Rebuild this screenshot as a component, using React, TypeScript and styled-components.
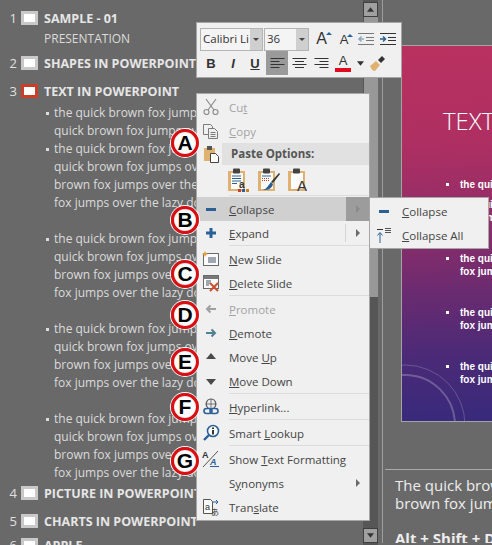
import React from 'react';
import styled, { createGlobalStyle } from 'styled-components';

const GlobalStyle = createGlobalStyle`
  html, body {
    margin: 0;
    padding: 0;
    background: #696969;
  }
`;

const UI_FONT = `"Open Sans", "Noto Sans", sans-serif`;

const Page = styled.div`
  position: relative;
  display: flex;
  width: 492px;
  height: 545px;
  overflow: hidden;
  background: #696969;
  font-family: ${UI_FONT};
`;

const Outline = styled.div`
  width: 363px;
  flex: none;
  padding-top: 8px;
  overflow: hidden;
  color: #e4e4e4;
`;

const TitleRow = styled.div<{ $gap: number }>`
  display: flex;
  align-items: center;
  height: 20px;
  margin-top: ${(p) => p.$gap}px;
  white-space: nowrap;
`;

const Num = styled.span`
  width: 18px;
  padding-right: 1px;
  box-sizing: border-box;
  text-align: right;
  font-size: 13px;
  color: #e0e0e0;
`;

const Thumb = styled.span<{ $active?: boolean }>`
  width: 11px;
  height: 8px;
  flex: none;
  margin: 0 6px 0 3px;
  background: #fff;
  border-style: solid;
  border-color: ${(p) => (p.$active ? '#c8402a' : '#c9c9c9')};
  border-width: 3px;
`;

const Title = styled.span`
  font-size: 12.5px;
  font-weight: 700;
  color: #e6e6e6;
`;

const SubTitle = styled.div`
  height: 18px;
  margin: 2px 0 5px 44px;
  line-height: 18px;
  font-size: 12px;
  color: #dcdcdc;
`;

const Body = styled.div`
  margin: 3px 0 1px 44px;
`;

const Bullet = styled.div<{ $after: number }>`
  position: relative;
  padding-left: 10px;
  margin-bottom: ${(p) => p.$after}px;
  &::before {
    content: '';
    position: absolute;
    left: 2px;
    top: 8px;
    width: 3px;
    height: 3px;
    background: #dcdcdc;
  }
`;

const BodyLine = styled.div`
  height: 18px;
  line-height: 18px;
  font-size: 12px;
  white-space: nowrap;
  color: #dcdcdc;
`;

const Scrollbar = styled.div`
  width: 15px;
  flex: none;
  display: flex;
  flex-direction: column;
  align-items: center;
  padding: 2px 0;
  box-sizing: border-box;
  background: #565656;
`;

const ScrollButton = styled.div`
  width: 15px;
  height: 15px;
  flex: none;
  box-sizing: border-box;
  display: flex;
  align-items: center;
  justify-content: center;
  background: #a0a0a0;
  border: 1px solid #3f3f3f;
`;

const ScrollThumb = styled.div`
  width: 14px;
  height: 280px;
  flex: none;
  background: #989898;
`;

const ScrollTrack = styled.div`
  flex: 1;
`;

const Side = styled.div`
  flex: 1;
  min-width: 0;
  margin-left: 4px;
  border-left: 1px solid #9d9d9d;
  overflow: hidden;
  height: 543px;
`;

const Slide = styled.div`
  position: relative;
  width: 200px;
  height: 375px;
  margin: 45px 0 0 18px;
  overflow: hidden;
  border: 1px solid #a4a4a4;
  box-sizing: content-box;
  background: linear-gradient(178deg, #b9315f 0%, #ae2f62 26%, #8f2d69 47%, #6a2b70 65%, #4a2a77 82%, #372a7b 100%);
`;

const SlideTitle = styled.div`
  padding: 58px 0 0 41px;
  height: 34px;
  line-height: 34px;
  font-size: 24px;
  font-weight: 300;
  color: #fff;
  white-space: nowrap;
`;

const SlideBullets = styled.div`
  padding: 40px 0 0 44px;
`;

const SlideBullet = styled.div<{ $gap: number }>`
  position: relative;
  padding-left: 14px;
  margin-top: ${(p) => p.$gap}px;
  font-family: 'Liberation Sans', Arial, sans-serif;
  font-size: 10px;
  font-weight: 700;
  line-height: 13px;
  color: #fff;
  white-space: nowrap;
  &::before {
    content: '';
    position: absolute;
    left: 0;
    top: 5px;
    width: 3px;
    height: 3px;
    background: #fff;
  }
`;

const SlideArt = styled.svg`
  position: absolute;
  left: 0;
  bottom: 0;
`;

const Notes = styled.div`
  margin: 47px 0 0 2px;
  border-top: 1px solid #a9a9a9;
  padding: 6px 0 0 10px;
  color: #eeeeee;
  font-size: 15px;
  line-height: 18px;
  white-space: nowrap;
`;

const NotesBold = styled.div`
  margin-top: 17px;
  font-weight: 700;
`;

const MiniBar = styled.div`
  position: absolute;
  left: 196px;
  top: 22px;
  width: 206px;
  height: 56px;
  box-sizing: border-box;
  padding: 4px 0 0 3px;
  background: #f0f0f0;
  border: 1px solid #a6a6a6;
  display: flex;
  flex-direction: column;
`;

const BarRow = styled.div`
  display: flex;
  align-items: center;
  height: 24px;
`;

const Combo = styled.div<{ $w: number }>`
  width: ${(p) => p.$w}px;
  height: 23px;
  box-sizing: border-box;
  display: flex;
  border: 1px solid #b4b4b4;
  margin-right: 1px;
  background: #f4f4f4;
`;

const ComboText = styled.span`
  flex: 1;
  min-width: 0;
  overflow: hidden;
  padding-left: 2px;
  font-size: 11.5px;
  line-height: 20px;
  white-space: nowrap;
  color: #333;
`;

const ComboArrow = styled.span`
  width: 12px;
  flex: none;
  background: #cfcfcf;
  display: flex;
  align-items: center;
  justify-content: center;
  &::after {
    content: '';
    border-left: 3px solid transparent;
    border-right: 3px solid transparent;
    border-top: 3px solid #444;
  }
`;

const BarBtn = styled.span<{ $w?: number; $on?: boolean }>`
  width: ${(p) => p.$w ?? 22}px;
  height: 24px;
  flex: none;
  display: flex;
  align-items: center;
  justify-content: center;
  background: ${(p) => (p.$on ? '#9a9a9a' : 'transparent')};
`;

const FmtLetter = styled.span<{ $italic?: boolean; $under?: boolean }>`
  font-family: 'Liberation Sans', Arial, sans-serif;
  font-size: 13px;
  font-weight: 700;
  color: #333;
  font-style: ${(p) => (p.$italic ? 'italic' : 'normal')};
  text-decoration: ${(p) => (p.$under ? 'underline' : 'none')};
`;

const GrowIcon = styled.span<{ $size: number }>`
  position: relative;
  font-family: 'Liberation Sans', Arial, sans-serif;
  font-size: ${(p) => p.$size}px;
  color: #333;
  &::after {
    content: '';
    position: absolute;
    right: -5px;
    top: 2px;
    border-left: 3px solid transparent;
    border-right: 3px solid transparent;
    border-bottom: 3px solid #2b6096;
  }
`;

const ColorA = styled.span`
  display: inline-block;
  width: 16px;
  text-align: center;
  font-family: 'Liberation Sans', Arial, sans-serif;
  font-size: 13px;
  line-height: 14px;
  color: #333;
  border-bottom: 4px solid #e00b1c;
`;

const Menu = styled.div`
  position: absolute;
  left: 196px;
  top: 93px;
  width: 174px;
  height: 428px;
  box-sizing: border-box;
  background: #f0f0f0;
  border: 1px solid #a6a6a6;
  padding-top: 1px;
  color: #444;
  font-size: 11.5px;
`;

const Item = styled.div<{ $hot?: boolean; $off?: boolean }>`
  display: flex;
  align-items: center;
  height: 24px;
  background: ${(p) => (p.$hot ? '#d0d0d0' : 'transparent')};
  color: ${(p) => (p.$off ? '#a3a3a3' : '#444')};
  white-space: nowrap;
`;

const ItemIcon = styled.span`
  width: 32px;
  flex: none;
  display: flex;
  align-items: center;
  justify-content: center;
  padding-right: 4px;
  box-sizing: border-box;
`;

const ItemLabel = styled.span`
  flex: 1;
`;

const Key = styled.span`
  text-decoration: underline;
`;

const Arrow = styled.span<{ $hot?: boolean }>`
  width: 23px;
  height: 100%;
  flex: none;
  box-sizing: border-box;
  display: flex;
  align-items: center;
  justify-content: center;
  background: ${(p) => (p.$hot ? '#9c9c9c' : 'transparent')};
  &::before {
    content: '';
    border-top: 4px solid transparent;
    border-bottom: 4px solid transparent;
    border-left: 4px solid ${(p) => (p.$hot ? '#8a8a8a' : '#6a6a6a')};
  }
`;

const ArrowEdge = styled.span`
  width: 1px;
  height: 18px;
  flex: none;
  background: #d5d5d5;
`;

const Sep = styled.div`
  height: 1px;
  margin: 0 0 1px 32px;
  background: #dcdcdc;
`;

const PasteHead = styled.div`
  display: flex;
  align-items: center;
  height: 22px;
`;

const PasteBar = styled.div`
  flex: 1;
  height: 22px;
  margin-left: -7px;
  padding-left: 9px;
  line-height: 22px;
  background: #e1e1e1;
  font-weight: 700;
  color: #555;
`;

const PasteIcons = styled.div`
  display: flex;
  gap: 8px;
  height: 30px;
  padding-left: 31px;
  align-items: center;
`;

const SubMenu = styled.div`
  position: absolute;
  left: 369px;
  top: 197px;
  width: 120px;
  height: 52px;
  box-sizing: border-box;
  padding: 1px 0;
  background: #f0f0f0;
  border: 1px solid #a6a6a6;
  font-size: 11.5px;
  color: #444;
`;

const Callout = styled.div<{ $y: number }>`
  position: absolute;
  left: 171px;
  top: ${(p) => p.$y - 14}px;
  width: 28px;
  height: 28px;
  box-sizing: border-box;
  border-radius: 50%;
  display: flex;
  align-items: center;
  justify-content: center;
  background: radial-gradient(circle at 50% 50%, #ffffff 62%, #f3b9b9 82%);
  border: 3px solid #d90f14;
  box-shadow: 0 0 0 1px #fff;
  font-family: 'Liberation Sans', Arial, sans-serif;
  font-weight: 700;
  font-size: 21px;
  color: #000;
`;

const Ink = '#44546a';
const Blue = '#2b6096';
const Tan = '#e0b272';

const IconSvg: React.FC<{ size?: number; children: React.ReactNode }> = ({ size = 18, children }) => (
  <svg width={size} height={size} viewBox="0 0 18 18" fill="none">
    {children}
  </svg>
);

const Scissors = () => (
  <IconSvg>
    <g stroke="#8d8d8d" strokeWidth="1.2">
      <path d="M4 1l8 11M14 1L6 12" />
      <circle cx="4.500" cy="14" r="2.500" />
      <circle cx="13.500" cy="14" r="2.500" />
    </g>
  </IconSvg>
);

const CopyIcon = () => (
  <IconSvg>
    <g stroke="#7b7b7b" fill="#f0f0f0">
      <path d="M1.500 2.500h7l2 2v8h-9z" />
      <path d="M6.500 6.500h6l3 3v7h-9z" />
    </g>
    <path d="M8.500 10.500h5M8.500 12.500h5M8.500 14.500h5" stroke="#7b7b7b" />
  </IconSvg>
);

const PasteIcon = () => (
  <IconSvg>
    <rect x="2" y="3" width="11" height="13" fill={Tan} />
    <rect x="5" y="1" width="5" height="4" fill="#555" />
    <path d="M8.500 8.500h5l3 3v6h-8z" fill="#fff" stroke="#444" />
  </IconSvg>
);

const Clip: React.FC<{ children: React.ReactNode }> = ({ children }) => (
  <svg width="22" height="24" viewBox="0 0 22 24" fill="none">
    <rect x="0" y="3" width="17" height="20" fill={Tan} />
    <rect x="3" y="5" width="12" height="16" fill="#fff" />
    <rect x="5" y="0.500" width="7" height="5" rx="1" fill="#444" />
    {children}
  </svg>
);

const PasteKeep = () => (
  <Clip>
    <path d="M4 8h9M4 10.500h9M4 13h9M4 15.500h5" stroke={Blue} />
    <text x="11" y="20" fontSize="10" fontWeight="700" fontFamily="Liberation Sans" fill="#333">a</text>
    <rect x="10" y="21" width="3" height="3" fill="#c8402a" />
    <rect x="14" y="21" width="3" height="3" fill="#2b6096" />
    <rect x="18" y="21" width="3" height="3" fill="#c9812b" />
  </Clip>
);

const PastePicture = () => (
  <Clip>
    <path d="M4 8h9" stroke={Blue} />
    <path d="M4 10.500h8M4 12.500h8" stroke="#c8402a" strokeDasharray="1 1" />
    <path d="M21 5l1 1-7 9-2-1z" fill="#333" />
    <path d="M13 14l2 2c-1 5-5 6-10 6 3-1 5-4 8-8z" fill={Blue} />
  </Clip>
);

const PasteText = () => (
  <Clip>
    <text x="9" y="23" fontSize="15" fontFamily="Liberation Sans" fill="#333">A</text>
  </Clip>
);

const Minus = () => (
  <IconSvg>
    <rect x="4" y="8" width="10" height="3" fill={Blue} />
  </IconSvg>
);

const Plus = () => (
  <IconSvg>
    <path d="M7.500 4h3v3.500H14v3h-3.500V14h-3v-3.500H4v-3h3.500z" fill={Blue} />
  </IconSvg>
);

const CollapseAll = () => (
  <IconSvg>
    <path d="M2 3.500h6" stroke="#333" />
    <path d="M10 2.500h6M10 4.500h6M10 6.500h6" stroke="#555" />
    <path d="M5 17V7M2.500 9.500L5 6.500l2.500 3" stroke={Blue} />
  </IconSvg>
);

const NewSlide = () => (
  <IconSvg>
    <rect x="1.500" y="3.500" width="15" height="12" fill="#fafafa" stroke="#6b6b6b" />
    <path d="M6 8h8M6 10h8M6 12h8" stroke={Ink} />
    <path d="M3 1l1 2 2 1-2 1-1 2-1-2-2-1 2-1z" fill="#e8a13f" />
  </IconSvg>
);

const DeleteSlide = () => (
  <IconSvg>
    <rect x="1.500" y="1.500" width="15" height="13" fill="#fafafa" stroke="#6b6b6b" />
    <rect x="2" y="2" width="14" height="3" fill="#777" />
    <path d="M4 7h5M4 9h4M4 11h3" stroke={Ink} />
    <path d="M8 9l8 8M16 9l-8 8" stroke="#c8502f" strokeWidth="2" />
  </IconSvg>
);

const ArrowLeft = () => (
  <IconSvg>
    <path d="M14 9H5M8.500 5.500L5 9l3.500 3.500" stroke="#a0a0a0" strokeWidth="2" />
  </IconSvg>
);

const ArrowRight = () => (
  <IconSvg>
    <path d="M4 9h9M9.500 5.500L13 9l-3.500 3.500" stroke="#4f8191" strokeWidth="2" />
  </IconSvg>
);

const Up = () => (
  <IconSvg>
    <path d="M9 5l5 6H4z" fill="#4a4a4a" />
  </IconSvg>
);

const Down = () => (
  <IconSvg>
    <path d="M4 7h10l-5 6z" fill="#4a4a4a" />
  </IconSvg>
);

const LinkIcon = () => (
  <IconSvg>
    <circle cx="9" cy="6" r="5" stroke="#555" fill="#f0f0f0" />
    <path d="M4 6h10M9 1v10M6 1.500c-2 3-2 6 0 9M12 1.500c2 3 2 6 0 9" stroke="#555" strokeWidth=".8" />
    <rect x="2" y="10.500" width="8" height="5" rx="2.500" stroke={Blue} strokeWidth="1.600" />
    <rect x="8" y="10.500" width="8" height="5" rx="2.500" stroke={Blue} strokeWidth="1.600" />
  </IconSvg>
);

const LookupIcon = () => (
  <IconSvg>
    <circle cx="11" cy="7" r="5.500" stroke={Blue} strokeWidth="1.600" fill="#fff" />
    <path d="M7 11l-5 5" stroke={Blue} strokeWidth="2.400" />
    <rect x="10" y="6" width="2" height="4.500" fill="#333" />
    <rect x="10" y="3.500" width="2" height="1.500" fill="#333" />
  </IconSvg>
);

const FormatIcon = () => (
  <IconSvg>
    <text x="0" y="8" fontSize="9" fontWeight="700" fontFamily="Liberation Sans" fill="#333">A</text>
    <path d="M16 1L1 17" stroke="#555" />
    <text x="8" y="15" fontSize="9" fontWeight="700" fontStyle="italic" fontFamily="Liberation Sans" fill={Blue}>A</text>
    <path d="M8 16.500h9" stroke={Blue} />
  </IconSvg>
);

const TranslateIcon = () => (
  <IconSvg>
    <path d="M1.500 1.500h7l2 2v12h-9z" fill="#fafafa" stroke="#555" />
    <text x="3" y="12" fontSize="9" fontFamily="Liberation Sans" fill="#333">a</text>
    <path d="M11 4h5M14 2l2 2-2 2" stroke={Blue} />
    <text x="9" y="17" fontSize="8" fontFamily="Noto Sans CJK SC" fill="#333">あ</text>
  </IconSvg>
);

const Indent: React.FC<{ more?: boolean }> = ({ more }) => (
  <svg width="18" height="14" viewBox="0 0 18 14" fill="none">
    <path d="M1 1.500h16M9 5.500h8M9 8.500h8M1 12.500h16" stroke={more ? '#333' : '#777'} />
    {more ? (
      <path d="M1 7h5M4 4.500L6.500 7 4 9.500" stroke={Blue} strokeWidth="1.500" />
    ) : (
      <path d="M7 7H2M4.500 4.500L2 7l2.500 2.500" stroke="#8fa6bd" strokeWidth="1.500" />
    )}
  </svg>
);

const ALIGN_SHORT = {
  left: 'M.5 4.500h9M.5 10.500h9',
  center: 'M3 4.500h9M3 10.500h9',
  right: 'M5.500 4.500h9M5.500 10.500h9',
};

const Align: React.FC<{ kind: 'left' | 'center' | 'right' }> = ({ kind }) => (
  <svg width="15" height="12" viewBox="0 0 15 12" fill="none">
    <path d="M.5 1.500h14M.5 7.500h14" stroke="#333" />
    <path d={ALIGN_SHORT[kind]} stroke="#333" />
  </svg>
);

const Painter = () => (
  <svg width="18" height="18" viewBox="0 0 18 18" fill="none">
    <path d="M1 12l6-5 4 4-5 6c-2 0-4-2-5-5z" fill={Tan} />
    <path d="M9 6l4-4 3 3-4 4z" fill="#333" />
  </svg>
);

const Tri: React.FC<{ down?: boolean }> = ({ down }) => (
  <svg width="7" height="5" viewBox="0 0 9 6">
    <path d={down ? 'M0 0h9L4.500 6z' : 'M0 6h9L4.500 0z'} fill="#333" />
  </svg>
);

const LONG_BULLET = [
  'the quick brown fox jumps over the lazy dog the',
  'quick brown fox jumps over the lazy dog the quick',
  'brown fox jumps over the lazy dog the quick brown',
  'fox jumps over the lazy dog',
];

const PANE_BULLETS: { lines: string[]; after: number }[] = [
  { lines: ['the quick brown fox jumps over the lazy dog the', 'quick brown fox jumps over the lazy dog'], after: 0 },
  { lines: LONG_BULLET, after: 18 },
  { lines: LONG_BULLET, after: 18 },
  { lines: LONG_BULLET, after: 18 },
  { lines: LONG_BULLET, after: 0 },
];

const SLIDE_GAPS = [0, 7, 28, 28, 28];

const CALLOUTS: [string, number][] = [
  ['A', 143],
  ['B', 220],
  ['C', 274],
  ['D', 315],
  ['E', 362],
  ['F', 407],
  ['G', 461],
];

const App = () => (
  <Page>
    <GlobalStyle />
    <Outline>
      <TitleRow $gap={0}>
        <Num>1</Num>
        <Thumb />
        <Title>SAMPLE - 01</Title>
      </TitleRow>
      <SubTitle>PRESENTATION</SubTitle>
      <TitleRow $gap={0}>
        <Num>2</Num>
        <Thumb />
        <Title>SHAPES IN POWERPOINT</Title>
      </TitleRow>
      <TitleRow $gap={8}>
        <Num>3</Num>
        <Thumb $active />
        <Title>TEXT IN POWERPOINT</Title>
      </TitleRow>
      <Body>
        {PANE_BULLETS.map((bullet, i) => (
          <Bullet key={i} $after={bullet.after}>
            {bullet.lines.map((line) => (
              <BodyLine key={line}>{line}</BodyLine>
            ))}
          </Bullet>
        ))}
      </Body>
      <TitleRow $gap={0}>
        <Num>4</Num>
        <Thumb />
        <Title>PICTURE IN POWERPOINT</Title>
      </TitleRow>
      <TitleRow $gap={8}>
        <Num>5</Num>
        <Thumb />
        <Title>CHARTS IN POWERPOINT</Title>
      </TitleRow>
      <TitleRow $gap={4}>
        <Num>6</Num>
        <Thumb />
        <Title>APPLE</Title>
      </TitleRow>
    </Outline>

    <Scrollbar>
      <ScrollButton>
        <Tri />
      </ScrollButton>
      <ScrollThumb />
      <ScrollTrack />
      <ScrollButton>
        <Tri down />
      </ScrollButton>
    </Scrollbar>

    <Side>
      <Slide>
        <SlideArt width="110" height="70" viewBox="0 0 110 70" fill="none">
          <circle cx="3" cy="74" r="60" stroke="#ffffff" strokeOpacity=".2" strokeWidth="1" />
          <circle cx="3" cy="74" r="50" stroke="#ffffff" strokeOpacity=".24" strokeWidth="2" />
        </SlideArt>
        <SlideTitle>TEXT IN POWERPOINT</SlideTitle>
        <SlideBullets>
          {SLIDE_GAPS.map((gap, i) => (
            <SlideBullet key={i} $gap={gap}>
              the quick brown fox jumps over
              {i > 0 && (
                <>
                  <br />
                  fox jumps over the lazy dog
                </>
              )}
            </SlideBullet>
          ))}
        </SlideBullets>
      </Slide>
      <Notes>
        The quick brown fox jumps over the lazy dog the quick
        <br />
        brown fox jumps over the lazy dog
        <NotesBold>Alt + Shift + D</NotesBold>
      </Notes>
    </Side>

    <MiniBar>
      <BarRow>
        <Combo $w={63}>
          <ComboText>Calibri Li</ComboText>
          <ComboArrow />
        </Combo>
        <Combo $w={45}>
          <ComboText>36</ComboText>
          <ComboArrow />
        </Combo>
        <BarBtn $w={23}>
          <GrowIcon $size={16}>A</GrowIcon>
        </BarBtn>
        <BarBtn $w={22}>
          <GrowIcon $size={13}>A</GrowIcon>
        </BarBtn>
        <BarBtn>
          <Indent />
        </BarBtn>
        <BarBtn>
          <Indent more />
        </BarBtn>
      </BarRow>
      <BarRow>
        <BarBtn>
          <FmtLetter>B</FmtLetter>
        </BarBtn>
        <BarBtn>
          <FmtLetter $italic>I</FmtLetter>
        </BarBtn>
        <BarBtn>
          <FmtLetter $under>U</FmtLetter>
        </BarBtn>
        <BarBtn $on>
          <Align kind="left" />
        </BarBtn>
        <BarBtn>
          <Align kind="center" />
        </BarBtn>
        <BarBtn>
          <Align kind="right" />
        </BarBtn>
        <BarBtn>
          <ColorA>A</ColorA>
        </BarBtn>
        <BarBtn $w={12}>
          <Tri down />
        </BarBtn>
        <BarBtn $w={24}>
          <Painter />
        </BarBtn>
      </BarRow>
    </MiniBar>

    <Menu>
      <Item $off>
        <ItemIcon>
          <Scissors />
        </ItemIcon>
        <ItemLabel>
          Cu<Key>t</Key>
        </ItemLabel>
      </Item>
      <Item $off>
        <ItemIcon>
          <CopyIcon />
        </ItemIcon>
        <ItemLabel>
          <Key>C</Key>opy
        </ItemLabel>
      </Item>
      <PasteHead>
        <ItemIcon>
          <PasteIcon />
        </ItemIcon>
        <PasteBar>Paste Options:</PasteBar>
      </PasteHead>
      <PasteIcons>
        <PasteKeep />
        <PastePicture />
        <PasteText />
      </PasteIcons>
      <Sep />
      <Item $hot>
        <ItemIcon>
          <Minus />
        </ItemIcon>
        <ItemLabel>
          <Key>C</Key>ollapse
        </ItemLabel>
        <Arrow $hot />
      </Item>
      <Item>
        <ItemIcon>
          <Plus />
        </ItemIcon>
        <ItemLabel>
          <Key>E</Key>xpand
        </ItemLabel>
        <ArrowEdge />
        <Arrow />
      </Item>
      <Sep />
      <Item>
        <ItemIcon>
          <NewSlide />
        </ItemIcon>
        <ItemLabel>
          <Key>N</Key>ew Slide
        </ItemLabel>
      </Item>
      <Item>
        <ItemIcon>
          <DeleteSlide />
        </ItemIcon>
        <ItemLabel>
          <Key>D</Key>elete Slide
        </ItemLabel>
      </Item>
      <Sep />
      <Item $off>
        <ItemIcon>
          <ArrowLeft />
        </ItemIcon>
        <ItemLabel>
          <Key>P</Key>romote
        </ItemLabel>
      </Item>
      <Item>
        <ItemIcon>
          <ArrowRight />
        </ItemIcon>
        <ItemLabel>
          <Key>D</Key>emote
        </ItemLabel>
      </Item>
      <Item>
        <ItemIcon>
          <Up />
        </ItemIcon>
        <ItemLabel>
          Move <Key>U</Key>p
        </ItemLabel>
      </Item>
      <Item>
        <ItemIcon>
          <Down />
        </ItemIcon>
        <ItemLabel>
          <Key>M</Key>ove Down
        </ItemLabel>
      </Item>
      <Sep />
      <Item>
        <ItemIcon>
          <LinkIcon />
        </ItemIcon>
        <ItemLabel>
          <Key>H</Key>yperlink...
        </ItemLabel>
      </Item>
      <Sep />
      <Item>
        <ItemIcon>
          <LookupIcon />
        </ItemIcon>
        <ItemLabel>
          Smart <Key>L</Key>ookup
        </ItemLabel>
      </Item>
      <Sep />
      <Item>
        <ItemIcon>
          <FormatIcon />
        </ItemIcon>
        <ItemLabel>
          Show <Key>T</Key>ext Formatting
        </ItemLabel>
      </Item>
      <Item>
        <ItemIcon />
        <ItemLabel>
          S<Key>y</Key>nonyms
        </ItemLabel>
        <Arrow />
      </Item>
      <Item>
        <ItemIcon>
          <TranslateIcon />
        </ItemIcon>
        <ItemLabel>
          Tran<Key>s</Key>late
        </ItemLabel>
      </Item>
    </Menu>

    <SubMenu>
      <Item>
        <ItemIcon>
          <Minus />
        </ItemIcon>
        <ItemLabel>
          <Key>C</Key>ollapse
        </ItemLabel>
      </Item>
      <Item>
        <ItemIcon>
          <CollapseAll />
        </ItemIcon>
        <ItemLabel>
          <Key>C</Key>ollapse All
        </ItemLabel>
      </Item>
    </SubMenu>

    {CALLOUTS.map(([letter, y]) => (
      <Callout key={letter} $y={y}>
        {letter}
      </Callout>
    ))}
  </Page>
);

export default App;
